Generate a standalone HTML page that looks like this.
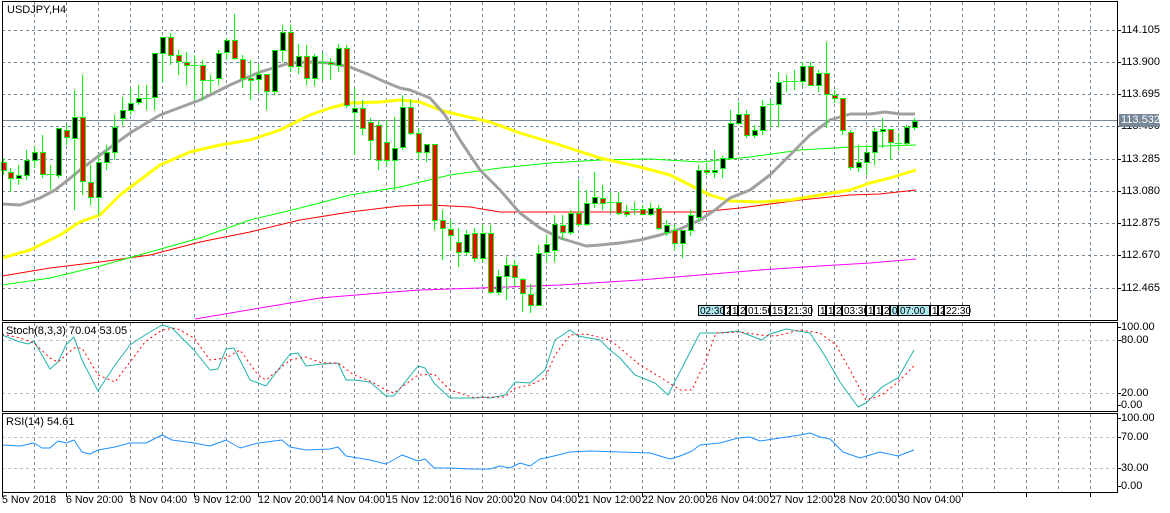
<!DOCTYPE html>
<html><head><meta charset="utf-8">
<style>
html,body{margin:0;padding:0;background:#fff;}
body{width:1170px;height:513px;position:relative;overflow:hidden;font-family:"Liberation Sans",sans-serif;font-size:11px;color:#000;}
.t{position:absolute;white-space:nowrap;line-height:12px;}
.ax{position:absolute;left:1121px;white-space:nowrap;line-height:12px;font-size:11px;}
.dl{position:absolute;top:494px;white-space:nowrap;font-size:10.6px;}
.bx{position:absolute;top:305px;height:11px;border:1px solid #000;font-size:10px;line-height:11px;padding:0 1px;background:#fff;box-sizing:border-box;}
.cy{background:#b0e8f0;}
</style></head><body>
<svg id="s" width="1170" height="513" style="position:absolute;left:0;top:0" xmlns="http://www.w3.org/2000/svg"></svg>

<div class="t" style="left:7px;top:4px;">USDJPY,H4</div>
<div class="t" style="left:6px;top:325px;">Stoch(8,3,3) 70.04 53.05</div>
<div class="t" style="left:6px;top:416px;">RSI(14) 54.61</div>

<div class="ax" style="top:24px">114.105</div>
<div class="ax" style="top:56px">113.900</div>
<div class="ax" style="top:88px">113.695</div>
<div class="ax" style="top:120px">113.490</div>
<div class="ax" style="top:153px">113.285</div>
<div class="ax" style="top:185px">113.080</div>
<div class="ax" style="top:217px">112.875</div>
<div class="ax" style="top:249px">112.670</div>
<div class="ax" style="top:282px">112.465</div>
<div style="position:absolute;left:1119px;top:114px;width:40px;height:13px;background:#778899;color:#fff;font-size:11px;line-height:13px;padding-left:2px;box-sizing:border-box;">113.532</div>

<div class="ax" style="top:321px">100.00</div>
<div class="ax" style="top:334px">80.00</div>
<div class="ax" style="top:387px">20.00</div>
<div class="ax" style="top:399px">0.00</div>
<div class="ax" style="top:412px">100.00</div>
<div class="ax" style="top:431px">70.00</div>
<div class="ax" style="top:462px">30.00</div>
<div class="ax" style="top:480px">0.00</div>

<div class="dl" style="left:2px">5 Nov 2018</div>
<div class="dl" style="left:66px">6 Nov 20:00</div>
<div class="dl" style="left:130px">8 Nov 04:00</div>
<div class="dl" style="left:194px">9 Nov 12:00</div>
<div class="dl" style="left:258px">12 Nov 20:00</div>
<div class="dl" style="left:322px">14 Nov 04:00</div>
<div class="dl" style="left:386px">15 Nov 12:00</div>
<div class="dl" style="left:450px">16 Nov 20:00</div>
<div class="dl" style="left:514px">20 Nov 04:00</div>
<div class="dl" style="left:578px">21 Nov 12:00</div>
<div class="dl" style="left:642px">22 Nov 20:00</div>
<div class="dl" style="left:706px">26 Nov 04:00</div>
<div class="dl" style="left:770px">27 Nov 12:00</div>
<div class="dl" style="left:834px">28 Nov 20:00</div>
<div class="dl" style="left:898px">30 Nov 04:00</div>

<div class="bx cy" style="left:698px;width:26px">02:30</div>
<div class="bx" style="left:724px;width:6px">2</div>
<div class="bx" style="left:730px;width:8px">1</div>
<div class="bx" style="left:738px;width:8px">2</div>
<div class="bx" style="left:746px;width:24px;overflow:hidden">01:50</div>
<div class="bx" style="left:770px;width:16px;overflow:hidden">15:</div>
<div class="bx" style="left:786px;width:26px">21:30</div>
<div class="bx" style="left:818px;width:8px">1</div>
<div class="bx" style="left:826px;width:8px">1</div>
<div class="bx" style="left:834px;width:8px">2</div>
<div class="bx" style="left:842px;width:24px;overflow:hidden">03:30</div>
<div class="bx" style="left:866px;width:8px">1</div>
<div class="bx" style="left:874px;width:8px">1</div>
<div class="bx" style="left:882px;width:8px">2</div>
<div class="bx cy" style="left:890px;width:8px">0</div>
<div class="bx cy" style="left:898px;width:32px">07:00</div>
<div class="bx" style="left:930px;width:8px">1</div>
<div class="bx" style="left:938px;width:6px;overflow:hidden">2</div>
<div class="bx" style="left:944px;width:26px">22:30</div>

<script>
var s=document.getElementById('s'),h='';
function L(x1,y1,x2,y2,c,w,d){h+='<line x1="'+x1+'" y1="'+y1+'" x2="'+x2+'" y2="'+y2+'" stroke="'+c+'" stroke-width="'+(w||1)+'"'+(d?' stroke-dasharray="'+d+'"':'')+'/>';}
function P(pts,c,w,d){var a=[];for(var i=0;i<pts.length;i+=2)a.push(pts[i]+','+pts[i+1]);h+='<polyline points="'+a.join(' ')+'" fill="none" stroke="'+c+'" stroke-width="'+(w||1)+'"'+(d?' stroke-dasharray="'+d+'"':'')+' stroke-linejoin="round"/>';}
for(var x=34;x<1117;x+=32){L(x+.5,2,x+.5,320,'#778899',1,'3,3');L(x+.5,323,x+.5,411,'#778899',1,'3,3');L(x+.5,414,x+.5,492,'#778899',1,'3,3');}
[30,62,94,126,159,191,223,255,288].forEach(function(y){L(2,y+.5,1117,y+.5,'#778899',1,'3,3');L(1117,y+.5,1121,y+.5,'#000');});
[340,393].forEach(function(y){L(2,y+.5,1117,y+.5,'#c0c0c0',1,'3,3');L(1117,y+.5,1121,y+.5,'#000');});
[437,468].forEach(function(y){L(2,y+.5,1117,y+.5,'#c0c0c0',1,'3,3');L(1117,y+.5,1121,y+.5,'#000');});
[327,405,418,486].forEach(function(y){L(1117,y+.5,1121,y+.5,'#000');});
L(2,120.5,1117,120.5,'#778899',1);
P([195,319,260,308,320,298,380,293,420,290,480,288,560,285,640,280,700,275,760,270,820,266,870,263,916,259],'#ff00ff',1);
P([2,276,50,268,100,262,150,255,200,242,250,232,300,220,350,212,400,206,430,205,470,207,500,212,560,212,640,212,700,212,740,208,800,200,850,195,880,194,916,190],'#ff0000',1);
P([2,285,50,278,100,266,150,252,200,238,250,220,300,208,350,195,400,187,450,175,500,168,550,163,600,160,650,159,700,162,750,157,800,150,850,147,916,145],'#00ff00',1);
P([2,258,30,250,60,235,80,222,100,215,120,195,140,180,160,165,190,152,220,145,250,140,280,130,310,115,330,108,350,103,380,102,400,100,420,102,440,110,460,115,490,122,520,133,560,145,600,158,640,167,670,175,690,185,710,195,730,201,760,202,790,200,820,195,850,190,870,183,890,178,916,170],'#ffff00',3);
P([2,204,20,205,40,198,55,190,68,180,80,170,100,155,130,133,160,115,200,100,230,85,260,72,290,63,310,62,330,63,350,67,370,75,385,82,400,88,410,90,430,98,445,115,460,140,480,170,500,190,520,213,540,228,560,238,586,246,600,245,620,243,640,240,660,235,680,229,700,220,715,210,730,198,750,190,770,175,790,155,810,135,830,120,850,114,870,114,885,112,900,114,915,114],'#a0a0a0',3);
var C=[[3,162,170,158,175,'r'],[10,172,178,168,192,'r'],[18,175,178,165,185,'b'],[26,160,175,150,180,'b'],[34,152,160,147,168,'b'],[42,152,174,135,178,'r'],[50,174,174,165,190,'d'],[58,128,175,128,178,'b'],[66,130,137,125,145,'r'],[74,117,138,90,210,'b'],[82,117,181,75,195,'r'],[90,182,197,165,205,'r'],[98,162,197,155,215,'b'],[106,152,162,145,170,'b'],[114,127,152,115,160,'b'],[122,110,118,97,125,'b'],[130,103,110,88,115,'b'],[138,98,102,85,105,'b'],[146,98,98,85,110,'d'],[154,53,97,53,110,'b'],[162,37,53,37,82,'b'],[170,37,55,33,65,'r'],[178,55,61,50,75,'r'],[186,62,65,52,85,'r'],[194,65,65,55,100,'d'],[202,65,80,60,100,'r'],[210,80,80,75,93,'d'],[218,53,78,50,85,'b'],[226,40,52,38,60,'b'],[234,40,58,14,60,'r'],[242,59,78,55,88,'r'],[250,78,80,60,100,'r'],[258,74,79,64,92,'b'],[266,74,91,74,110,'r'],[274,50,91,50,95,'b'],[282,32,50,25,62,'b'],[290,32,66,25,72,'r'],[298,56,66,44,74,'b'],[306,56,78,45,85,'r'],[314,56,78,54,86,'b'],[322,62,62,53,80,'d'],[330,62,64,58,80,'r'],[338,48,65,44,72,'b'],[346,48,105,45,108,'r'],[354,108,112,88,155,'b'],[362,108,128,100,135,'r'],[370,122,140,118,160,'r'],[378,125,160,120,170,'r'],[386,142,160,120,165,'r'],[394,148,160,117,190,'b'],[402,107,147,95,150,'b'],[410,107,133,100,135,'r'],[418,133,152,128,160,'r'],[426,144,152,144,162,'b'],[434,144,220,144,230,'r'],[442,220,228,210,260,'r'],[450,229,235,220,250,'r'],[458,242,252,228,267,'r'],[466,234,252,230,255,'b'],[474,233,258,228,262,'r'],[482,233,258,225,262,'b'],[490,233,292,225,294,'r'],[498,276,292,270,295,'b'],[506,265,276,257,300,'b'],[514,265,277,260,286,'r'],[522,279,293,278,312,'r'],[530,294,305,284,313,'r'],[538,253,305,245,306,'b'],[546,244,252,235,262,'b'],[554,224,250,215,262,'b'],[562,225,232,215,240,'r'],[570,213,232,210,235,'b'],[578,213,224,180,226,'r'],[586,203,224,190,226,'b'],[594,197,203,172,208,'b'],[602,198,203,185,210,'r'],[610,202,202,192,212,'d'],[618,202,213,192,215,'r'],[626,211,214,205,217,'r'],[634,209,209,202,215,'d'],[642,209,214,205,215,'r'],[650,208,214,203,216,'b'],[658,208,228,205,230,'r'],[666,225,232,220,236,'b'],[674,230,243,225,250,'r'],[682,230,243,230,258,'b'],[690,215,230,210,236,'b'],[698,170,217,165,222,'b'],[706,170,172,163,175,'r'],[714,170,172,150,178,'b'],[722,158,168,156,178,'b'],[730,123,158,110,160,'b'],[738,114,123,102,125,'b'],[746,114,135,110,138,'r'],[754,130,135,125,138,'b'],[762,106,130,100,135,'b'],[770,104,104,100,127,'d'],[778,82,104,72,127,'b'],[786,81,81,75,92,'d'],[794,81,81,70,90,'d'],[802,66,81,62,86,'b'],[810,66,85,62,86,'r'],[818,73,85,70,92,'b'],[826,73,94,42,128,'r'],[834,95,98,90,103,'r'],[842,98,130,98,135,'r'],[850,132,167,130,170,'r'],[858,162,167,145,172,'b'],[866,152,162,145,175,'b'],[874,131,152,128,165,'b'],[882,129,131,118,148,'b'],[890,129,142,129,160,'r'],[898,143,143,133,150,'d'],[906,127,143,125,145,'b'],[914,121,127,118,130,'b']];
C.forEach(function(c){var x=c[0];L(x+.5,c[3],x+.5,c[4],'#00ff00');
 if(c[5]=='d'){L(x-3,c[1]+.5,x+4,c[1]+.5,'#00ff00');}
 else{h+='<rect x="'+(x-2+.5)+'" y="'+(c[1]+.5)+'" width="5" height="'+Math.max(1,c[2]-c[1])+'" fill="'+(c[5]=='b'?'#000':'#ff0000')+'" stroke="#00ff00" stroke-width="1"/>';}
});
var st=[2,335,20,342,28,344,34,341,50,369,58,362,66,345,74,337,82,360,98,391,115,365,130,345,145,335,162,325,172,328,194,350,210,370,218,369,226,349,234,348,250,380,266,386,290,354,298,353,306,366,322,364,338,363,346,380,354,380,370,382,386,396,394,396,418,366,425,368,434,383,450,398,475,398,482,397,490,398,505,395,515,382,530,383,545,370,555,340,570,330,578,336,600,340,610,350,620,358,635,375,655,383,668,395,686,360,700,333,720,333,738,331,762,340,770,334,786,329,810,333,825,356,840,382,858,407,866,403,882,387,894,380,898,378,914,350];
var sg2=[2,334,20,338,34,343,50,358,58,362,74,348,82,348,98,375,115,382,130,362,145,342,162,330,176,328,194,338,210,360,226,358,240,350,258,375,266,380,290,360,306,357,322,363,338,363,354,375,370,381,386,390,394,393,418,375,434,374,450,390,475,398,490,397,505,397,515,388,530,385,545,378,555,355,570,335,586,334,610,340,620,348,640,365,660,377,680,390,692,390,706,360,716,333,740,332,760,335,776,336,800,330,820,333,836,345,850,370,866,400,882,395,898,382,914,366];
P(st,'#20b2aa',1);
P(sg2,'#ff0000',1,'2,3');
P([2,445,20,446,34,443,42,448,50,448,58,441,66,443,74,440,82,452,90,454,98,450,115,447,130,443,146,443,162,435,172,440,194,443,210,446,226,440,240,448,258,443,282,440,290,447,306,450,330,449,338,447,346,456,370,460,386,464,402,455,418,461,425,459,434,468,450,468,470,469,490,469,500,466,510,468,520,463,530,466,540,459,550,457,570,452,590,451,620,452,650,453,670,459,680,456,692,451,700,445,720,443,738,438,750,437,760,441,780,438,800,435,810,433,820,437,830,439,843,452,860,458,880,452,898,456,914,450],'#1e90ff',1);
h+='<rect x="2.5" y="1.5" width="1115" height="319" fill="none" stroke="#000" stroke-width="1"/>';
h+='<rect x="2.5" y="322.5" width="1115" height="89" fill="none" stroke="#000" stroke-width="1"/>';
h+='<rect x="2.5" y="413.5" width="1115" height="79" fill="none" stroke="#000" stroke-width="1"/>';
for(var x=2;x<1117;x+=64){L(x+.5,492,x+.5,497,'#000');}
s.innerHTML=h;
</script>
</body></html>
